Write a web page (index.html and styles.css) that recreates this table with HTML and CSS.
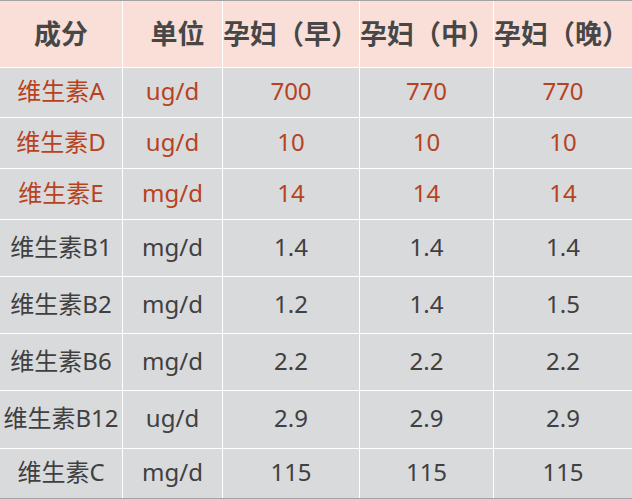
FILE: index.html
```html
<!DOCTYPE html>
<html lang="zh">
<head>
<meta charset="utf-8">
<title>维生素需求表</title>
<link rel="stylesheet" href="styles.css">
</head>
<body>
<div class="table">
  <div class="cell head">成分</div>
  <div class="cell head unit-head">单位</div>
  <div class="cell head">孕妇（早）</div>
  <div class="cell head">孕妇（中）</div>
  <div class="cell head">孕妇（晚）</div>

  <div class="cell red">维生素A</div>
  <div class="cell red">ug/d</div>
  <div class="cell red">700</div>
  <div class="cell red">770</div>
  <div class="cell red">770</div>

  <div class="cell red">维生素D</div>
  <div class="cell red">ug/d</div>
  <div class="cell red">10</div>
  <div class="cell red">10</div>
  <div class="cell red">10</div>

  <div class="cell red">维生素E</div>
  <div class="cell red">mg/d</div>
  <div class="cell red">14</div>
  <div class="cell red">14</div>
  <div class="cell red">14</div>

  <div class="cell">维生素B1</div>
  <div class="cell">mg/d</div>
  <div class="cell">1.4</div>
  <div class="cell">1.4</div>
  <div class="cell">1.4</div>

  <div class="cell">维生素B2</div>
  <div class="cell">mg/d</div>
  <div class="cell">1.2</div>
  <div class="cell">1.4</div>
  <div class="cell">1.5</div>

  <div class="cell">维生素B6</div>
  <div class="cell">mg/d</div>
  <div class="cell">2.2</div>
  <div class="cell">2.2</div>
  <div class="cell">2.2</div>

  <div class="cell">维生素B12</div>
  <div class="cell">ug/d</div>
  <div class="cell">2.9</div>
  <div class="cell">2.9</div>
  <div class="cell">2.9</div>

  <div class="cell">维生素C</div>
  <div class="cell">mg/d</div>
  <div class="cell">115</div>
  <div class="cell">115</div>
  <div class="cell">115</div>
</div>
</body>
</html>
```
FILE: styles.css
```css
html, body {
  margin: 0;
  padding: 0;
  background: #ffffff;
}

.table {
  width: 632px;
  display: grid;
  grid-template-columns: 122px 99px 136px 133px 138px;
  grid-template-rows: 66px 49px 50px 50px 56px 56px 56px 57px 49px;
  gap: 1px;
  background: #ffffff;
  border-top: 1px solid #a3a3a3;
  border-bottom: 1px solid #a3a3a3;
  font-family: "Noto Sans", "Noto Sans CJK SC", sans-serif;
}

.cell {
  display: flex;
  align-items: center;
  justify-content: center;
  background: #d9dadc;
  color: #404040;
  font-size: 24px;
  line-height: 1;
  padding-bottom: 3px;
  white-space: nowrap;
  overflow: visible;
}

.head {
  background: #f9dfd8;
  color: #474747;
  font-size: 27px;
  font-weight: bold;
  font-family: "Noto Sans CJK SC", sans-serif;
  justify-content: flex-start;
}

.head:first-child {
  justify-content: center;
}

.unit-head {
  justify-content: center;
  padding-left: 10px;
}

.red {
  color: #b8421e;
}
```
